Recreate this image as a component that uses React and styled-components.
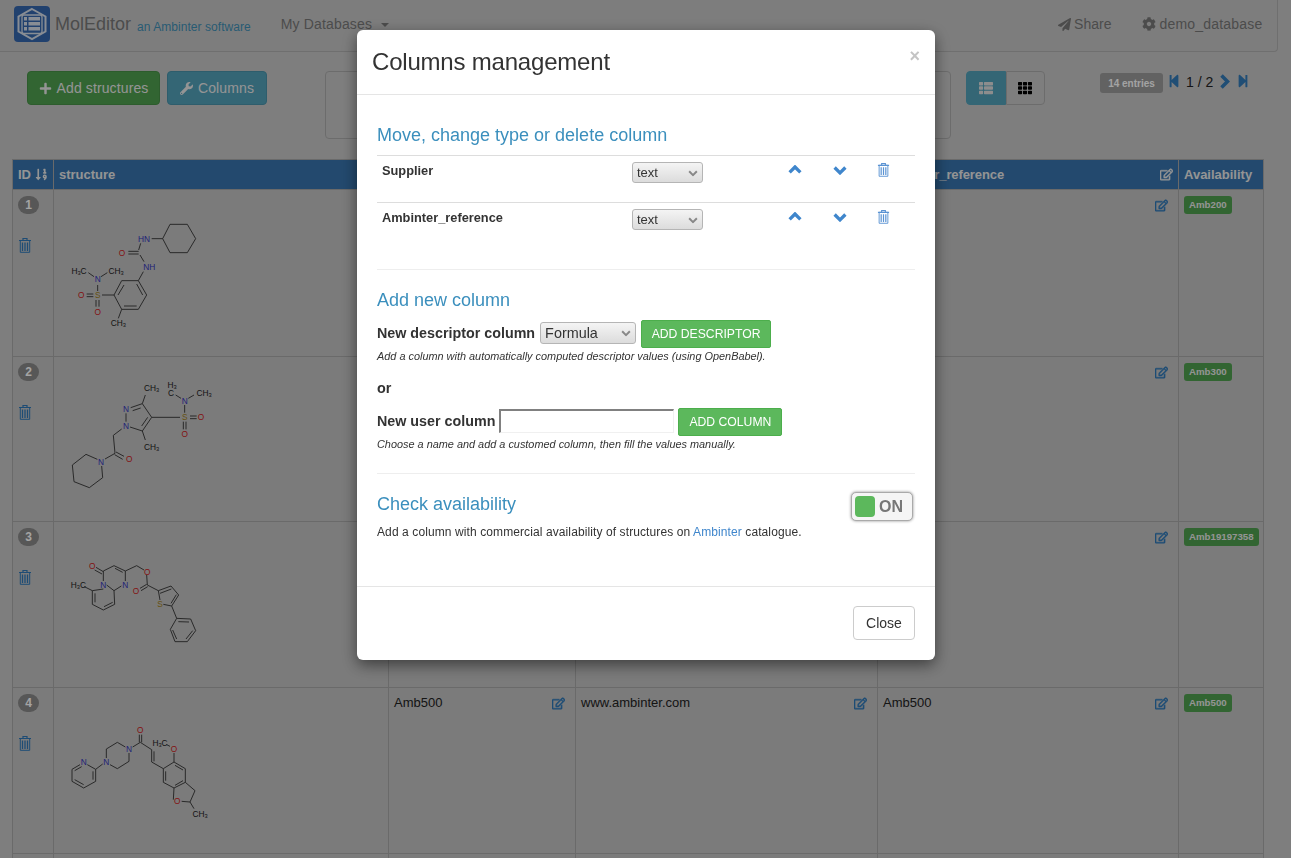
import React from 'react';
import styled, { createGlobalStyle } from 'styled-components';
import {
  FaPlus, FaWrench, FaPaperPlane, FaCog, FaThList, FaTh, FaStepBackward, FaStepForward,
  FaSortNumericDown, FaRegEdit,
} from 'react-icons/fa';

const Global = createGlobalStyle`
  html, body { margin: 0; padding: 0; height: 100%; overflow: hidden; }
  body { font-family: "Liberation Sans", Arial, sans-serif; font-size: 14px; color: #333; background: #c6c6c6; }
  * { box-sizing: border-box; }
`;

const Page = styled.div`height: 858px; overflow: hidden;`;

const Navbar = styled.nav`
  width: 1278px; height: 52px; display: flex; align-items: center; padding: 0 0 3px 14px; white-space: nowrap;
  background: #c4c4c4; border: 1px solid #aeaeae; border-width: 0 1px 1px 0; border-radius: 0 0 4px 0;
  & > * { flex-shrink: 0; }
`;
const Brand = styled.span`font-size: 18px; color: #777; margin-left: 5px;`;
const Tagline = styled.span`font-size: 12px; color: #3f8fb5; margin-left: 6px; margin-top: 5px; letter-spacing: .05px;`;
const NavLink = styled.span`
  font-size: 14px; color: #777; display: inline-flex; align-items: center; gap: 3px; letter-spacing: ${p => p.$track || 0}px;
  margin-left: ${p => p.$gap}px;
`;
const Caret = styled.span`
  display: inline-block; margin-left: 6px; margin-top: 2px; border-top: 4px solid #777;
  border-left: 4px solid transparent; border-right: 4px solid transparent;
`;

const Toolbar = styled.div`display: flex; align-items: flex-start; padding: 19px 0 0 27px; height: 107px;`;
const ActionButton = styled.button`
  height: 34px; width: ${p => p.$w}px; margin-right: 7px; padding: 0; border: 1px solid ${p => p.$border};
  background: ${p => p.$bg}; color: #e8e8e8; border-radius: 4px; font: 14px "Liberation Sans", Arial, sans-serif; letter-spacing: .12px;
  display: inline-flex; align-items: center; justify-content: center; gap: 5px;
`;
const FilterPanel = styled.div`
  width: 626px; height: 68px; margin-left: 51px; border: 1px solid #aaa; border-radius: 4px;
`;
const ViewGroup = styled.div`display: flex; margin-left: 15px; width: 79px; height: 34px;`;
const ViewButton = styled.span`
  flex: 1; display: flex; align-items: center; justify-content: center;
  background: ${p => p.$active ? '#52a0b8' : 'transparent'};
  border: 1px solid ${p => p.$active ? '#52a0b8' : '#aaa'};
  border-radius: ${p => p.$active ? '4px 0 0 4px' : '0 4px 4px 0'};
  color: ${p => p.$active ? '#ddd' : '#000'}; font-size: 14px;
`;
const Pager = styled.div`display: flex; align-items: center; margin-left: 55px; margin-top: 2px; height: 20px; color: #337ab7; font-size: 14px;`;
const PagerIcon = styled.span`line-height: 0; margin-top: -4px; margin-left: ${p => p.$left || 0}px;`;
const EntriesBadge = styled.span`
  width: 63px; height: 20px; border-radius: 3px; background: #999; color: #fff; font-size: 10px; font-weight: bold;
  display: flex; align-items: center; justify-content: center; margin-right: 4px;
`;
const PageText = styled.span`color: #222; font-size: 14px; margin: -3px 6px 0 5px;`;

const TableWrap = styled.div`padding-left: 12px;`;
const DataTable = styled.table`
  width: 1251px; table-layout: fixed; border-collapse: collapse; background: #c0c0c0;
  font-size: 13px;
`;
const HeadCell = styled.th`
  background: #3773ac; color: #e8e8e8; height: 30px; padding: 0 5px; text-align: left; font-size: 13px; font-weight: bold;
  border: 1px solid #a6a6a6; white-space: nowrap;
`;
const HeadInner = styled.div`display: flex; align-items: center; justify-content: space-between;`;
const RefTitle = styled.span`letter-spacing: -.1px;`;
const Cell = styled.td`
  height: ${p => p.$h}px; vertical-align: top; padding: 6px 5px 5px; border: 1px solid #a6a6a6; color: #222;
`;
const CellInner = styled.div`display: flex; justify-content: space-between; align-items: flex-start; padding: 1px 5px 0 0;`;
const MolCell = styled(Cell)`padding: 0;`;
const RowBadge = styled.span`
  display: flex; width: 21px; height: 18px; border-radius: 10px; background: #888; color: #fff; font-weight: bold;
  font-size: 12px; align-items: center; justify-content: center;
`;
const TrashWrap = styled.div`margin: 23px 0 0 0; line-height: 0; color: #2f78b8;`;
const BlueEdit = styled.span`color: #2f78b8; font-size: 13px; line-height: 0; margin-top: 2px;`;
const Label = styled.span`
  display: inline-block; height: 18px; line-height: 18px; padding: 0 5px; border-radius: 3px;
  background: #4f9f4f; color: #e8e8e8; font-size: 9.7px; font-weight: bold; white-space: nowrap;
`;

const Backdrop = styled.div`position: fixed; inset: 0; background: rgba(0,0,0,.36);`;
const Dialog = styled.div`
  position: fixed; top: 30px; left: 357px; width: 578px; height: 630px; background: #fff; border-radius: 6px;
  box-shadow: 0 5px 15px rgba(0,0,0,.5); display: flex; flex-direction: column;
`;
const DialogHeader = styled.header`
  height: 65px; padding: 0 15px; border-bottom: 1px solid #e5e5e5; display: flex; align-items: center; justify-content: space-between;
`;
const Title = styled.h3`margin: 0; font-size: 24px; font-weight: 400; color: #333; line-height: 64px; letter-spacing: -.2px;`;
const Dismiss = styled.span`font-size: 18px; font-weight: bold; color: #c4c4c4; margin-top: -12px;`;
const DialogBody = styled.div`flex: 1; padding: 0 20px;`;
const SectionTitle = styled.h4`margin: 0; font-size: 18px; font-weight: 400; color: #3b8fbd; line-height: 20px;`;
const ColumnsHead = styled.div`padding-top: 30px; height: 61px; border-bottom: 1px solid #ddd;`;
const ColumnRow = styled.div`
  height: 47px; display: grid; grid-template-columns: 250px 155px 45px 45px 1fr; padding: 6px 0 0 5px;
  border-bottom: ${p => p.$last ? 'none' : '1px solid #ddd'};
`;
const ColumnName = styled.b`font-size: 12.8px; color: #333; line-height: 18px;`;
const SelectBox = styled.span`
  position: relative; display: inline-block; width: ${p => p.$w}px; height: ${p => p.$h}px; line-height: 0;
  margin-top: ${p => p.$top || 0}px;
`;
const NativeSelect = styled.select`
  appearance: none; width: 100%; height: 100%; padding: 0 0 0 4px; border: 1px solid #b5b5b5; border-radius: 3px;
  background: linear-gradient(#f4f4f4, #dcdcdc); color: #333; font: ${p => p.$size}px "Liberation Sans", Arial, sans-serif;
`;
const SelectArrow = styled.span`position: absolute; right: 5px; top: 50%; transform: translateY(-50%); color: #888; line-height: 0;`;
const MoveIcon = styled.span`color: #3f86cc; line-height: 0; padding: 3px 0 0 156px; margin-left: -155px;`;
const TrashCell = styled.span`line-height: 0; color: #5b93d3;`;
const Rule = styled.div`height: 1px; background: #eee; margin-top: ${p => p.$top}px;`;
const AddHead = styled(SectionTitle)`margin-top: 20px;`;
const FieldRow = styled.div`display: flex; align-items: center; margin-top: ${p => p.$top}px; height: 28px;`;
const FieldLabel = styled.b`font-size: 14.3px; color: #333; margin: -2px ${p => p.$gap}px 0 0; white-space: nowrap;`;
const GreenButton = styled.button`
  height: 28px; width: ${p => p.$w}px; margin-left: ${p => p.$left}px; border: 1px solid #4cae4c; border-radius: 2px;
  background: #5cb85c; color: #fff; font: 12.2px "Liberation Sans", Arial, sans-serif; text-transform: uppercase; padding: 0;
`;
const Note = styled.p`margin: ${p => p.$top}px 0 0; font-size: 10.9px; font-style: italic; color: #333; line-height: 13px;`;
const OrText = styled.p`margin: 17px 0 0; font-size: 14.4px; font-weight: bold; color: #333; line-height: 16px;`;
const TextField = styled.input`
  width: 175px; height: 24px; margin-top: -2px; background: #fff; padding: 0;
  border-style: solid; border-width: 2px 1px 1px 2px; border-color: #808080 #f0f0f0 #f0f0f0 #808080;
`;
const AvailabilityRow = styled.div`display: flex; justify-content: space-between; margin-top: 17px; height: 31px;`;
const AvailHead = styled(SectionTitle)`margin-top: 3px;`;
const Toggle = styled.span`
  width: 62px; height: 29px; margin: 1px 2px 0 0; border: 1px solid #aaa; border-radius: 5px; background: #f5f5f5;
  box-shadow: 0 0 3px rgba(0,0,0,.45); display: flex; align-items: center; padding-left: 3px; gap: 4px;
  color: #777; font-weight: bold; font-size: 16px;
`;
const ToggleKnob = styled.span`width: 20px; height: 21px; border-radius: 4px; background: #5cb85c;`;
const Body12 = styled.p`margin: 2px 0 0; font-size: 12px; color: #333; line-height: 16px; letter-spacing: .1px;`;
const TextLink = styled.a`color: #3f86cc; text-decoration: none;`;
const DialogFooter = styled.footer`
  height: 74px; border-top: 1px solid #e5e5e5; padding: 19px 20px 0; display: flex; justify-content: flex-end; align-items: flex-start;
`;
const CloseButton = styled.button`
  width: 62px; height: 34px; background: #fff; border: 1px solid #ccc; border-radius: 4px; color: #333; padding: 0;
  font: 14px "Liberation Sans", Arial, sans-serif;
`;

const Trash = ({ size = 14 }) => (
  <svg width={size} height={size + 2} viewBox="0 0 14 16" fill="none" stroke="currentColor">
    <path d="M1 3.5h12M5 3.5V1.5h4v2" strokeWidth="1.2" />
    <path d="M2.3 3.5h9.4v11.8H2.3z" strokeWidth="1" />
    <path d="M4.5 5.5v8.5M7 5.5v8.5M9.5 5.5v8.5" strokeWidth="1.3" />
  </svg>
);

const Chevron = ({ dir = 'down', w = 14, stroke = 3.4 }) => (
  <svg width={w} height={w * 0.7} viewBox="0 0 14 10" fill="none" stroke="currentColor" strokeWidth={stroke}>
    <path d={dir === 'down' ? 'M1.5 2.5 7 8 12.5 2.5' : 'M1.5 7.5 7 2 12.5 7.5'} />
  </svg>
);
const ChevronRight = () => (
  <svg width="11" height="15" viewBox="0 0 11 15" fill="none" stroke="currentColor" strokeWidth="3.6">
    <path d="M2.5 1.5 8.5 7.5 2.5 13.5" />
  </svg>
);

const Logo = () => (
  <svg width="36" height="36" viewBox="0 0 36 36">
    <rect width="36" height="36" rx="4" fill="#3567ad" />
    <path d="M18 3 31.5 10.5v15L18 33 4.5 25.500v-15z" fill="none" stroke="#d5dde8" strokeWidth="2" />
    <rect x="8" y="9" width="20" height="18.500" rx="2" fill="none" stroke="#d5dde8" strokeWidth="1.300" />
    <path d="M10 11h3v3.500h-3zM14.500 11H26v3.500H14.500zM10 16h3v3.500h-3zM14.500 16H26v3.500H14.500zM10 21h3v3.500h-3zM14.500 21H26v3.500H14.500z" fill="#d5dde8" />
  </svg>
);

const COLORS = { N: '#3333bb', O: '#cc2222', S: '#a08020', C: '#222' };
const Atom = ({ x, y, t, c = 'C' }) => {
  const parts = t.split(/(\d)/).filter(Boolean);
  let shifted = false;
  return (
    <text x={x} y={y + 9} textAnchor="middle" fontSize="25" fontFamily="Liberation Sans, Arial, sans-serif" fill={COLORS[c]}>
      {parts.map((part, i) => {
        const digit = /\d/.test(part);
        const dy = digit ? 3 : shifted ? -3 : 0;
        shifted = digit;
        return <tspan key={i} fontSize={digit ? 17 : 25} dy={dy}>{part}</tspan>;
      })}
    </text>
  );
};
const Molecule = ({ top, bonds, atoms }) => (
  <svg width="186" height="160" viewBox={`162 ${top} 558 480`} style={{ display: 'block' }}>
    <path d={bonds} fill="none" stroke="#333" strokeWidth="2.700" />
    {atoms.map((a, i) => <Atom key={i} {...a} />)}
  </svg>
);

const MOLS = [
  {
    top: 0,
    bonds: 'M510 103H562L587 146 562 188H510L488 146ZM455 146H488M422 160 416 180M385 184H416M385 192H416M420 195 432 215M430 245 415 272H365L342 315 365 358H415L440 315 415 272M372 285 354 315M372 348H410M410 282 428 315M342 315H306M260 312H280M260 320H280M293 285V303M288 330V350M297 330V350M282 260 265 248M303 260 322 248M365 358 355 385',
    atoms: [
      { x: 432, y: 146, t: 'HN', c: 'N' }, { x: 366, y: 188, t: 'O', c: 'O' }, { x: 448, y: 230, t: 'NH', c: 'N' },
      { x: 293, y: 267, t: 'N', c: 'N' }, { x: 293, y: 316, t: 'S', c: 'S' }, { x: 244, y: 316, t: 'O', c: 'O' },
      { x: 293, y: 365, t: 'O', c: 'O' }, { x: 237, y: 243, t: 'H3C' }, { x: 348, y: 243, t: 'CH3' }, { x: 355, y: 400, t: 'CH3' },
    ],
  },
  {
    top: -9,
    bonds: 'M378 160V185M390 201 427 213 455 172 427 131 392 143M398 152 422 144M425 198 443 172M427 131 436 105M427 213 436 240M455 172H540M570 168H590M570 176H590M550 185V208M558 185V208M554 135V158M565 115 582 105M543 115 527 105M365 207 340 226 345 280M348 276 372 289M344 284 368 298M345 280 315 297M292 298 258 283 217 315 222 365 268 383 308 353 305 318',
    atoms: [
      { x: 378, y: 148, t: 'N', c: 'N' }, { x: 378, y: 197, t: 'N', c: 'N' }, { x: 554, y: 123, t: 'N', c: 'N' },
      { x: 554, y: 172, t: 'S', c: 'S' }, { x: 603, y: 172, t: 'O', c: 'O' }, { x: 554, y: 222, t: 'O', c: 'O' },
      { x: 388, y: 296, t: 'O', c: 'O' }, { x: 303, y: 305, t: 'N', c: 'N' },
      { x: 455, y: 85, t: 'CH3' }, { x: 455, y: 260, t: 'CH3' }, { x: 612, y: 98, t: 'CH3' }, { x: 516, y: 75, t: 'H3' }, { x: 513, y: 98, t: 'C' },
    ],
  },
  {
    top: -9,
    bonds: 'M310 168V138L342 122 376 138V168M345 130 368 142M288 127 310 140M284 135 306 147M320 180 342 197 364 183M310 192 277 197V238L310 255 344 238 342 197M285 205V232M312 245 338 232M277 197 253 185M376 138 410 122 432 135M440 150 442 180M420 190 440 178M423 197 443 185M442 180 475 197 513 183 536 210 515 243 490 238M475 197 480 225M480 205 514 192M529 209 513 235M515 243 530 280 572 282 587 317 562 350 525 350 511 313 530 280M535 290 567 291M578 317 558 342M530 342 518 315',
    atoms: [
      { x: 277, y: 122, t: 'O', c: 'O' }, { x: 310, y: 180, t: 'N', c: 'N' }, { x: 376, y: 180, t: 'N', c: 'N' },
      { x: 442, y: 140, t: 'O', c: 'O' }, { x: 408, y: 198, t: 'O', c: 'O' }, { x: 480, y: 236, t: 'S', c: 'S' }, { x: 235, y: 180, t: 'H3C' },
    ],
  },
  {
    top: 0,
    bonds: 'M262 230 287 244V280L251 300 216 280V244L240 230M279 250V275M251 290 224 275M224 248 245 236M287 244 308 228M319 210V183L352 163 376 177M387 195V220L352 242 330 230M398 177 421 163M418 140V163M425 140V163M421 163 455 185V222L490 242M462 190V220M490 242 522 222 556 242V283L522 300 490 283ZM497 250V278M525 232 549 246M549 278 525 292M522 222V195M510 175 500 170M556 283 585 308 570 342 545 340M520 335 522 300M570 342 582 362',
    atoms: [
      { x: 251, y: 223, t: 'N', c: 'N' }, { x: 319, y: 223, t: 'N', c: 'N' }, { x: 387, y: 183, t: 'N', c: 'N' },
      { x: 421, y: 125, t: 'O', c: 'O' }, { x: 522, y: 183, t: 'O', c: 'O' }, { x: 532, y: 340, t: 'O', c: 'O' },
      { x: 480, y: 165, t: 'H3C' }, { x: 600, y: 378, t: 'CH3' },
    ],
  },
];

const ROWS = [
  { id: 1, ref: 'Amb200', avail: 'Amb200', h: 167 },
  { id: 2, ref: 'Amb300', avail: 'Amb300', h: 165 },
  { id: 3, ref: 'Amb400', avail: 'Amb19197358', h: 166 },
  { id: 4, ref: 'Amb500', avail: 'Amb500', h: 166 },
];

const EditCell = ({ text }) => (
  <Cell>
    <CellInner>
      <span>{text}</span>
      <BlueEdit><FaRegEdit stroke="currentColor" strokeWidth="20" /></BlueEdit>
    </CellInner>
  </Cell>
);

export default function App() {
  return (
    <>
      <Global />
      <Page>
        <Navbar>
          <Logo />
          <Brand>MolEditor</Brand>
          <Tagline>an Ambinter software</Tagline>
          <NavLink $gap={30} $track={.15}>My Databases<Caret /></NavLink>
          <NavLink $gap={669}><FaPaperPlane size={13} />Share</NavLink>
          <NavLink $gap={31} $track={.2}><FaCog size={14} />demo_database</NavLink>
        </Navbar>
        <Toolbar>
          <ActionButton $w={133} $bg="#4f9f4f" $border="#479047"><FaPlus size={13} />Add structures</ActionButton>
          <ActionButton $w={100} $bg="#52a0b8" $border="#4892aa"><FaWrench size={13} />Columns</ActionButton>
          <FilterPanel />
          <ViewGroup>
            <ViewButton $active><FaThList /></ViewButton>
            <ViewButton><FaTh /></ViewButton>
          </ViewGroup>
          <Pager>
            <EntriesBadge>14 entries</EntriesBadge>
            <PagerIcon><FaStepBackward size={14} /></PagerIcon>
            <PageText>1 / 2</PageText>
            <PagerIcon><ChevronRight /></PagerIcon>
            <PagerIcon $left={6}><FaStepForward size={14} /></PagerIcon>
          </Pager>
        </Toolbar>
        <TableWrap>
          <DataTable>
            <colgroup>
              <col style={{ width: 41 }} /><col style={{ width: 335 }} /><col style={{ width: 187 }} />
              <col style={{ width: 302 }} /><col style={{ width: 301 }} /><col style={{ width: 85 }} />
            </colgroup>
            <thead>
              <tr>
                <HeadCell><HeadInner>ID <FaSortNumericDown size={13} /></HeadInner></HeadCell>
                <HeadCell>structure</HeadCell>
                <HeadCell>Name</HeadCell>
                <HeadCell>Supplier</HeadCell>
                <HeadCell><HeadInner><RefTitle>Ambinter_reference</RefTitle> <FaRegEdit size={13} stroke="currentColor" strokeWidth="20" /></HeadInner></HeadCell>
                <HeadCell>Availability</HeadCell>
              </tr>
            </thead>
            <tbody>
              {ROWS.map((r, i) => (
                <tr key={r.id}>
                  <Cell $h={r.h}>
                    <RowBadge>{r.id}</RowBadge>
                    <TrashWrap><Trash /></TrashWrap>
                  </Cell>
                  <MolCell $h={r.h}><Molecule {...MOLS[i]} /></MolCell>
                  <EditCell text={r.ref} />
                  <EditCell text="www.ambinter.com" />
                  <EditCell text={r.ref} />
                  <Cell><Label>{r.avail}</Label></Cell>
                </tr>
              ))}
              <tr>
                {[0, 1, 2, 3, 4, 5].map(k => <Cell key={k} $h={30} />)}
              </tr>
            </tbody>
          </DataTable>
        </TableWrap>
      </Page>
      <Backdrop />
      <Dialog>
        <DialogHeader>
          <Title>Columns management</Title>
          <Dismiss>×</Dismiss>
        </DialogHeader>
        <DialogBody>
          <ColumnsHead><SectionTitle>Move, change type or delete column</SectionTitle></ColumnsHead>
          {['Supplier', 'Ambinter_reference'].map((name, i) => (
            <ColumnRow key={name} $last={i === 1}>
              <ColumnName>{name}</ColumnName>
              <SelectBox $w={71} $h={21}>
                <NativeSelect $size={13} defaultValue="text"><option>text</option></NativeSelect>
                <SelectArrow><Chevron w={10} stroke={2.8} /></SelectArrow>
              </SelectBox>
              <MoveIcon><Chevron dir="up" /></MoveIcon>
              <MoveIcon><Chevron /></MoveIcon>
              <TrashCell><Trash size={13} /></TrashCell>
            </ColumnRow>
          ))}
          <Rule $top={19} />
          <AddHead>Add new column</AddHead>
          <FieldRow $top={10}>
            <FieldLabel $gap={5}>New descriptor column</FieldLabel>
            <SelectBox $w={96} $h={22} $top={-2}>
              <NativeSelect $size={14.4} defaultValue="Formula"><option>Formula</option></NativeSelect>
              <SelectArrow><Chevron w={10} stroke={2.8} /></SelectArrow>
            </SelectBox>
            <GreenButton $w={130} $left={5}>Add descriptor</GreenButton>
          </FieldRow>
          <Note $top={2}>Add a column with automatically computed descriptor values (using OpenBabel).</Note>
          <OrText>or</OrText>
          <FieldRow $top={12}>
            <FieldLabel $gap={4}>New user column</FieldLabel>
            <TextField />
            <GreenButton $w={104} $left={4}>Add column</GreenButton>
          </FieldRow>
          <Note $top={2}>Choose a name and add a customed column, then fill the values manually.</Note>
          <Rule $top={22} />
          <AvailabilityRow>
            <AvailHead>Check availability</AvailHead>
            <Toggle><ToggleKnob />ON</Toggle>
          </AvailabilityRow>
          <Body12>Add a column with commercial availability of structures on <TextLink>Ambinter</TextLink> catalogue.</Body12>
        </DialogBody>
        <DialogFooter><CloseButton>Close</CloseButton></DialogFooter>
      </Dialog>
    </>
  );
}
